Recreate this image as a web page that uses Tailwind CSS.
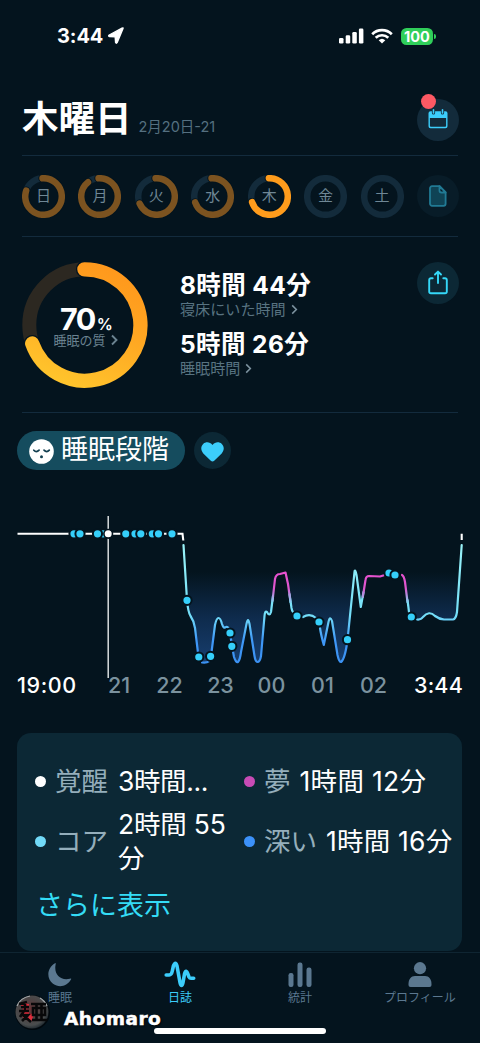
<!DOCTYPE html>
<html lang="ja">
<head>
<meta charset="utf-8">
<title>睡眠日誌</title>
<script src="https://cdn.jsdelivr.net/npm/@tailwindcss/browser@4"></script>
</head>
<body class="bg-[#04141e]">
<div class="relative flex h-[1043px] w-[480px] flex-col overflow-hidden bg-[#04141e] font-[Inter,'Noto_Sans_CJK_JP',sans-serif] text-white">

  <!-- Status bar -->
  <div class="flex h-[72px] shrink-0 items-center justify-between pr-[44px] pl-[57px]">
    <div class="flex items-center gap-1">
      <span class="text-[20px] leading-[24px] font-bold tracking-[-0.1px]">3:44</span>
      <svg class="h-[18px] w-[18px]" viewBox="0 0 18 18"><path d="M16 1.500 10.200 15.500Q9.300 17 8.600 15.500L8.200 9.900 2.500 9.500Q.9 9.100 2.200 8L15 1.200Q16.400.6 16 1.500Z" fill="#fff" stroke="#fff" stroke-width="1.400" stroke-linejoin="round"/></svg>
    </div>
    <div class="flex items-center">
      <svg class="h-[16px] w-[25px]" viewBox="0 0 25 16" fill="#fff"><rect x="0" y="10" width="4.500" height="5.500" rx="1.300"/><rect x="6.700" y="7.300" width="4.500" height="8.200" rx="1.300"/><rect x="13.300" y="4" width="4.500" height="11.500" rx="1.300"/><rect x="19.900" y="0.500" width="4.500" height="15" rx="1.300"/></svg>
      <svg class="ml-[7px] h-[16px] w-[22px]" viewBox="0 0 22 16" fill="none" stroke="#fff" stroke-width="2.700"><path d="M1.200 6.200a14 14 0 0 1 19.600 0"/><path d="M4.700 9.800a9 9 0 0 1 12.600 0"/><path d="M11 15.600 7.700 12.300a4.800 4.800 0 0 1 6.600 0Z" fill="#fff" stroke="none"/></svg>
      <div class="ml-[8px] flex h-[17px] w-[32px] items-center justify-center rounded-[5.500px] bg-[#30cf5a] text-[14.500px] leading-[17px] font-bold">100</div>
      <div class="ml-px h-[5px] w-[2px] rounded-r-full bg-[#30cf5a]"></div>
    </div>
  </div>

  <!-- Date header -->
  <div class="mx-[22px] flex h-[84px] shrink-0 justify-between border-b-[1.500px] border-[#132b3d]">
    <div class="flex items-baseline gap-[7px] pt-[24px]">
      <h1 class="text-[36.500px] leading-[46px] font-bold">木曜日</h1>
      <span class="text-[14.500px] leading-[20px] text-[#557080]">2月20日-21</span>
    </div>
    <div class="relative mt-[27px] -mr-px flex h-[42px] w-[42px] items-center justify-center rounded-full bg-[#132b3b]">
      <svg class="-mt-[2px] h-[20px] w-[20px]" viewBox="0 0 20 20"><path d="M2.500 2.200H3.900V4a1.600 1.600 0 0 0 3.200 0V2.200h5.800V4a1.600 1.600 0 0 0 3.200 0V2.200h1.400a2 2 0 0 1 2 2v13a2 2 0 0 1-2 2h-15a2 2 0 0 1-2-2v-13a2 2 0 0 1 2-2Z" fill="#3ccdfb"/><rect x="4.700" y="0" width="1.600" height="4.800" rx=".8" fill="#3ccdfb"/><rect x="13.700" y="0" width="1.600" height="4.800" rx=".8" fill="#3ccdfb"/><path d="M1.900 9H18.100V16.800a1 1 0 0 1-1 1H2.900a1 1 0 0 1-1-1Z" fill="#132b3b"/></svg>
      <span class="absolute top-[-5px] left-[4px] h-[15px] w-[15px] rounded-full bg-[#fd5964]"></span>
    </div>
  </div>

  <!-- Week -->
  <div class="mx-[22px] flex h-[81px] shrink-0 items-center justify-between border-b-[1.500px] border-[#132b3d] text-[15px] text-[#6f8795]">
    <div class="grid h-[43px] w-[43px] place-items-center *:col-start-1 *:row-start-1"><svg class="h-[43px] w-[43px]" viewBox="0 0 43 43" fill="none"><circle cx="21.500" cy="21.500" r="18.300" stroke="#132b3b" stroke-width="6.500"/><g transform="rotate(-93 21.500 21.500)" stroke-linecap="round"><circle cx="21.500" cy="21.500" r="18.300" pathLength="100" stroke-dasharray="81 100" stroke="#04141e" stroke-width="8.500"/><circle cx="21.500" cy="21.500" r="18.300" pathLength="100" stroke-dasharray="81 100" stroke="#7c5320" stroke-width="6.500"/></g></svg><span class="-mt-[2px] leading-none">日</span></div>
    <div class="grid h-[43px] w-[43px] place-items-center *:col-start-1 *:row-start-1"><svg class="h-[43px] w-[43px]" viewBox="0 0 43 43" fill="none"><circle cx="21.500" cy="21.500" r="18.300" stroke="#132b3b" stroke-width="6.500"/><g transform="rotate(-93 21.500 21.500)" stroke-linecap="round"><circle cx="21.500" cy="21.500" r="18.300" pathLength="100" stroke-dasharray="90 100" stroke="#04141e" stroke-width="8.500"/><circle cx="21.500" cy="21.500" r="18.300" pathLength="100" stroke-dasharray="90 100" stroke="#7c5320" stroke-width="6.500"/></g></svg><span class="-mt-[2px] leading-none">月</span></div>
    <div class="grid h-[43px] w-[43px] place-items-center *:col-start-1 *:row-start-1"><svg class="h-[43px] w-[43px]" viewBox="0 0 43 43" fill="none"><circle cx="21.500" cy="21.500" r="18.300" stroke="#132b3b" stroke-width="6.500"/><g transform="rotate(-93 21.500 21.500)" stroke-linecap="round"><circle cx="21.500" cy="21.500" r="18.300" pathLength="100" stroke-dasharray="69.500 100" stroke="#04141e" stroke-width="8.500"/><circle cx="21.500" cy="21.500" r="18.300" pathLength="100" stroke-dasharray="69.500 100" stroke="#7c5320" stroke-width="6.500"/></g></svg><span class="-mt-[2px] leading-none">火</span></div>
    <div class="grid h-[43px] w-[43px] place-items-center *:col-start-1 *:row-start-1"><svg class="h-[43px] w-[43px]" viewBox="0 0 43 43" fill="none"><circle cx="21.500" cy="21.500" r="18.300" stroke="#132b3b" stroke-width="6.500"/><g transform="rotate(-93 21.500 21.500)" stroke-linecap="round"><circle cx="21.500" cy="21.500" r="18.300" pathLength="100" stroke-dasharray="70.500 100" stroke="#04141e" stroke-width="8.500"/><circle cx="21.500" cy="21.500" r="18.300" pathLength="100" stroke-dasharray="70.500 100" stroke="#7c5320" stroke-width="6.500"/></g></svg><span class="-mt-[2px] leading-none">水</span></div>
    <div class="grid h-[43px] w-[43px] place-items-center *:col-start-1 *:row-start-1"><svg class="h-[43px] w-[43px]" viewBox="0 0 43 43" fill="none"><circle cx="21.500" cy="21.500" r="18.300" stroke="#132b3b" stroke-width="6.500"/><g transform="rotate(-92 21.500 21.500)" stroke-linecap="round"><circle cx="21.500" cy="21.500" r="18.300" pathLength="100" stroke-dasharray="70.500 100" stroke="#04141e" stroke-width="8.500"/><circle cx="21.500" cy="21.500" r="18.300" pathLength="100" stroke-dasharray="70.500 100" stroke="#ff9c1c" stroke-width="6.500"/></g></svg><span class="-mt-[2px] leading-none">木</span></div>
    <div class="grid h-[43px] w-[43px] place-items-center *:col-start-1 *:row-start-1"><svg class="h-[43px] w-[43px]" viewBox="0 0 43 43" fill="none"><circle cx="21.500" cy="21.500" r="18.300" stroke="#132b3b" stroke-width="6.500"/></svg><span class="-mt-[2px] leading-none">金</span></div>
    <div class="grid h-[43px] w-[43px] place-items-center *:col-start-1 *:row-start-1"><svg class="h-[43px] w-[43px]" viewBox="0 0 43 43" fill="none"><circle cx="21.500" cy="21.500" r="18.300" stroke="#132b3b" stroke-width="6.500"/></svg><span class="-mt-[2px] leading-none">土</span></div>
    <div class="-mr-px flex h-[42px] w-[42px] items-center justify-center rounded-full bg-[#081c28]">
      <svg class="h-[22px] w-[18px]" viewBox="0 0 18 22" fill="none" stroke="#217a94" stroke-width="1.800" stroke-linejoin="round"><path d="M3 1.200H10.500L16.600 7.500V18.800a2 2 0 0 1-2 2H3a2 2 0 0 1-2-2V3.200a2 2 0 0 1 2-2Z" fill="#0f4355"/><path d="M10.500 1.200V5.500a2 2 0 0 0 2 2H16.600Z" fill="#081c28"/></svg>
    </div>
  </div>

  <!-- Sleep quality -->
  <div class="mx-[22px] flex h-[176px] shrink-0 border-b-[1.500px] border-[#132b3d] pt-[25px]">
    <div class="grid h-[126px] w-[126px] place-items-center *:col-start-1 *:row-start-1">
      <svg class="h-[126px] w-[126px]" viewBox="0 0 126 126" fill="none">
        <defs><linearGradient id="quality" gradientUnits="userSpaceOnUse" x1="90" y1="5" x2="40" y2="120"><stop offset="0" stop-color="#ff981c"/><stop offset=".45" stop-color="#ffa722"/><stop offset="1" stop-color="#ffc42c"/></linearGradient></defs>
        <circle cx="63" cy="63" r="55.700" stroke="#2c2821" stroke-width="14"/>
        <path d="M62.400 7.300A55.700 55.700 0 1 1 10.200 81.500" stroke="#04141e" stroke-width="17" stroke-linecap="round"/>
        <path d="M62.400 7.300A55.700 55.700 0 1 1 10.200 81.500" stroke="url(#quality)" stroke-width="14.300" stroke-linecap="round"/>
      </svg>
      <div class="flex flex-col items-center pt-[3px]">
        <div class="flex h-[27px] items-baseline gap-[2px] pl-[3px] leading-[27px]"><span class="text-[30.500px] font-bold tracking-[-1.500px]">70</span><span class="text-[16px] leading-[16px] font-semibold">%</span></div>
        <div class="flex items-center gap-[5px] pl-px text-[13px] leading-[16px] text-[#6b8391]">睡眠の質<svg class="h-[12px] w-[7px]" viewBox="0 0 7 12" fill="none" stroke="currentColor" stroke-width="1.900"><path d="m1 1.500 4.500 4.500L1 10.500"/></svg></div>
      </div>
    </div>
    <div class="ml-[32px] flex flex-col pt-[8px]">
      <div class="text-[24.500px] leading-[30px] font-bold tracking-[0.4px]">8時間 44分</div>
      <div class="flex h-[19px] items-center gap-[5px] text-[15.100px] leading-[19px] text-[#587381]">寝床にいた時間<svg class="h-[11px] w-[7px] text-[#7d93a0]" viewBox="0 0 7 12" fill="none" stroke="currentColor" stroke-width="1.700"><path d="m1 1.500 4.500 4.500L1 10.500"/></svg></div>
      <div class="mt-[10px] text-[24.500px] leading-[30px] font-bold tracking-[0.4px]">5時間 26分</div>
      <div class="flex h-[19px] items-center gap-[5px] text-[15.100px] leading-[19px] text-[#587381]">睡眠時間<svg class="h-[11px] w-[7px] text-[#7d93a0]" viewBox="0 0 7 12" fill="none" stroke="currentColor" stroke-width="1.700"><path d="m1 1.500 4.500 4.500L1 10.500"/></svg></div>
    </div>
    <div class="-mr-px ml-auto flex h-[42px] w-[42px] items-center justify-center rounded-full bg-[#0c2835]">
      <svg class="-mt-[2px] h-[25px] w-[20px]" viewBox="0 0 20 25" fill="none" stroke="#35d8f8" stroke-width="1.900" stroke-linecap="round" stroke-linejoin="round"><path d="M4.700 8.300H3A1.800 1.800 0 0 0 1.200 10v11.500A1.800 1.800 0 0 0 3 23.300h14a1.800 1.800 0 0 0 1.800-1.800V10A1.800 1.800 0 0 0 17 8.300h-1.700M10 13V2.200M7 4.500 10 1.600l3 2.900"/></svg>
    </div>
  </div>

  <!-- Metric chips -->
  <div class="flex h-[57px] shrink-0 items-end gap-[9px] pl-[17px]">
    <div class="flex h-[39px] w-[168px] items-center gap-[7px] rounded-full bg-[#154c5e] pl-[12px]">
      <svg class="mt-px h-[25px] w-[25px]" viewBox="0 0 25 25" fill="none" stroke="#123f50" stroke-width="1.700" stroke-linecap="round"><circle cx="12.500" cy="12.500" r="12.300" fill="#fff" stroke="none"/><path d="M4.800 11.200q2.500 2.800 5.300 0M15 11.200q2.700 2.800 5.300 0"/><circle cx="12.500" cy="17.700" r="1.500" fill="#123f50" stroke="none"/></svg>
      <span class="-mt-[2px] text-[27px] leading-none">睡眠段階</span>
    </div>
    <div class="mb-px flex h-[37px] w-[37px] items-center justify-center rounded-full bg-[#0c2835]">
      <svg class="mt-[2px] h-[20px] w-[23px]" viewBox="0 0 23 20"><path d="M11.500 19.500Q10.600 19.500 9.800 18.800L2.300 11.400C-.7 8-.1 3.900 2.200 1.900 5-.5 9-.1 11.500 3 14-.1 18-.5 20.800 1.900c2.300 2 2.900 6.100-.1 9.500L13.200 18.800Q12.400 19.500 11.500 19.500Z" fill="#3ccdfb"/></svg>
    </div>
  </div>

  <!-- Sleep stage chart -->
  <svg class="mt-[30px] h-[180px] w-[480px] shrink-0" viewBox="0 500 480 180" fill="none">
    <defs>
      <linearGradient id="stage" gradientUnits="userSpaceOnUse" x1="0" y1="540" x2="0" y2="665"><stop offset="0" stop-color="#9cf4f8"/><stop offset=".6" stop-color="#74dff8"/><stop offset=".8" stop-color="#3f98f8"/><stop offset="1" stop-color="#3b91f2"/></linearGradient>
      <linearGradient id="dream" gradientUnits="userSpaceOnUse" x1="0" y1="570" x2="0" y2="604"><stop offset="0" stop-color="#ea50d0"/><stop offset=".55" stop-color="#dd57cd"/><stop offset="1" stop-color="#7de2f8"/></linearGradient>
      <linearGradient id="depth" gradientUnits="userSpaceOnUse" x1="0" y1="572" x2="0" y2="664"><stop offset="0" stop-color="#143866" stop-opacity="0"/><stop offset=".5" stop-color="#143866" stop-opacity=".65"/><stop offset="1" stop-color="#183f70"/></linearGradient>
    </defs>
    <path fill="url(#depth)" d="M183.500 545L187 600Q188 612 190.500 616Q194 621 195 628L198.500 657Q200 662 203 662.500Q209 663 211 656L215 625Q216.500 618 218.500 618Q220.500 618 222 624Q223.500 629 226 627Q229 626 230 633L232 646L234 657Q236 663 238 662Q240 660 241 652L246.500 624Q248 616 249.500 624L254.500 656Q255.500 662 257.500 662Q260 662 261 656L264.500 616Q265 610 267 612Q269.500 617 271 612L275 579Q276 574 280 574L285.500 572.500L288 584L291.500 608Q293 614 297 616Q304 617 310 615Q314 616 317 620Q320 623 321 633L323.800 645L328.500 622Q330 615 332 621L337.500 655Q339 662 341 662Q345 659 347.500 640L354.500 572Q355 568 356.500 575L360.800 607L363.500 592L365.500 580Q366 576 369 576L380 576.500L389 573.500L402 575Q404 576 405 582L408.500 610L411 617Q418 621 422 618Q429 610 435 616Q439 619 444 619.500L453 619.500Q456 619 457 612L461.700 545Z"/>
    <g stroke="url(#stage)" stroke-width="2.200" stroke-linecap="round" stroke-linejoin="round">
      <path d="M183.500 545L187 600Q188 612 190.500 616Q194 621 195 628L198.500 657M202 662.500Q207 663 208.500 661.500M211 656L215 625Q216.500 618 218.500 618Q220.500 618 222 624Q223.500 629 226 627Q229 626 230 633L232 646L234 657Q236 663 238 662Q240 660 241 652L246.500 624Q248 616 249.500 624L254.500 656Q255.500 662 257.500 662Q260 662 261 656L264.500 616Q265 610 267 612Q269.500 617 271 612L273 596"/>
      <path d="M289.500 594L291.500 608Q292 611 293 612M303 617Q310 613 316 618M320 628Q321 635 323.800 645L328.500 622Q330 615 332 621L337.500 655Q339 662 341 662Q345 659 347.500 640L354.500 572Q355 568 356.500 575L360.800 607L363.500 592M407.500 600L409 612M417 619.500Q421 620 423 617Q429 610 435 616Q439 619 444 619.500L453 619.500Q456 619 457 612L461.700 545"/>
    </g>
    <path d="M272.500 601L275 579Q276 574 280 574L285.500 572.500L288 584L290.500 602M362.800 597L365.500 580Q366 576 369 576L380 576.500L384 575.200M402 575Q404 576 405 582L407.500 602" stroke="url(#dream)" stroke-width="2.200" stroke-linecap="round" stroke-linejoin="round"/>
    <path d="M17.500 533.700H182.500L183.300 540.500M461.700 533.700V540" stroke="#fff" stroke-width="2.100"/>
    <g fill="#35cffa" stroke="#04141e" stroke-width="2">
      <circle cx="74" cy="533.800" r="4.600"/><circle cx="80" cy="533.800" r="4.600"/><circle cx="103" cy="533.800" r="4.600"/><circle cx="97.500" cy="533.800" r="4.600"/>
      <circle cx="125.800" cy="533.800" r="4.600"/><circle cx="135" cy="533.800" r="4.600"/><circle cx="140.800" cy="533.800" r="4.600"/><circle cx="152.300" cy="533.800" r="4.600"/><circle cx="158.500" cy="533.800" r="4.600"/><circle cx="172" cy="533.800" r="4.600"/>
      <circle cx="187" cy="600.300" r="4.600"/><circle cx="198.800" cy="657" r="4.600"/><circle cx="210.600" cy="656.300" r="4.600"/><circle cx="230" cy="633" r="4.600"/><circle cx="231.800" cy="646.300" r="4.600"/>
      <circle cx="297" cy="616" r="4.600"/><circle cx="319" cy="622" r="4.600"/><circle cx="347.500" cy="639.700" r="4.600"/><circle cx="389" cy="573" r="4.600"/><circle cx="395" cy="575" r="4.600"/><circle cx="411.300" cy="617" r="4.600"/>
    </g>
    <path d="M108.200 516V678" stroke="#e6e9ea" stroke-width="1.400"/>
    <circle cx="108.200" cy="533.800" r="4.300" fill="#fff" stroke="#04141e" stroke-width="1.600"/>
  </svg>
  <div class="-mt-[7px] flex h-[24px] shrink-0 text-[21.500px] leading-[25px] font-medium text-[#7b929e]">
    <span class="w-[90px] pl-[17px] tracking-[0.600px] text-white">19:00</span>
    <span class="w-[54px] pl-[4px] text-center">21</span>
    <span class="w-[51px] text-center">22</span>
    <span class="w-[51px] text-center">23</span>
    <span class="w-[51px] text-center">00</span>
    <span class="w-[51px] text-center">01</span>
    <span class="w-[51px] text-center">02</span>
    <span class="ml-auto pr-[17px] tracking-[0.2px] text-white">3:44</span>
  </div>

  <!-- Stage totals -->
  <div class="mt-[36px] ml-[17px] flex h-[218px] w-[445px] shrink-0 flex-col rounded-[14px] bg-[#0c2835] pt-[18px] pl-[18px] text-[26.500px] leading-[34px]">
    <div class="grid h-[120px] grid-cols-[209px_1fr] grid-rows-2 items-center">
      <div class="flex items-center"><i class="h-[11px] w-[11px] rounded-full bg-white"></i><span class="ml-[9px] w-[63px] text-[#94aebb]">覚醒</span><span class="tracking-[-0.4px]">3時間...</span></div>
      <div class="flex items-center whitespace-nowrap"><i class="h-[11px] w-[11px] rounded-full bg-[#c84bb5]"></i><span class="mr-[9px] ml-[9px] text-[#94aebb]">夢</span><span class="tracking-[0.300px]">1時間 12分</span></div>
      <div class="flex items-center"><i class="h-[11px] w-[11px] shrink-0 rounded-full bg-[#72daf8]"></i><span class="ml-[9px] w-[63px] shrink-0 text-[#94aebb]">コア</span><span class="tracking-[-0.2px] whitespace-nowrap">2時間 55<br>分</span></div>
      <div class="flex items-center whitespace-nowrap"><i class="h-[11px] w-[11px] rounded-full bg-[#3c91f9]"></i><span class="mr-[9px] ml-[9px] text-[#94aebb]">深い</span><span class="tracking-[0.200px]">1時間 16分</span></div>
    </div>
    <a class="mt-[18px] pl-px text-[27px] text-[#34dcf6]">さらに表示</a>
  </div>

  <!-- Tab bar -->
  <nav class="mt-px grid h-[91px] shrink-0 grid-cols-4 border-t border-[#0f2532] pt-[8px] text-[12px] leading-[16px] text-[#5b7890]">
    <div class="flex flex-col items-center"><svg class="h-[27px] w-[26px]" viewBox="0 0 26 27"><path d="M8 2.200Q9 1.500 8.700 3C6.500 13 13 20 22.800 17.800Q25 17 23.800 18.800C20 25.500 12 27 6 22.800-.8 17.500-.2 7 8 2.200Z" fill="#5b7890"/></svg><span class="mt-[2px]">睡眠</span></div>
    <div class="flex flex-col items-center text-[#3ccdfb]"><svg class="h-[27px] w-[32px]" viewBox="0 0 32 27" fill="none" stroke="currentColor" stroke-width="3.600" stroke-linecap="round" stroke-linejoin="round"><path d="M2.200 14H5.200Q7.500 14 8.300 10L9.400 5Q11.500-.5 13 5L16 21.500Q17.500 27.500 19 21.500L20.500 13Q22 7.500 24 13.500L25 16Q25.600 17.200 27 17.200H29.700"/></svg><span class="mt-[2px]">日誌</span></div>
    <div class="flex flex-col items-center"><svg class="h-[27px] w-[26px]" viewBox="0 0 26 27" fill="#5b7890"><rect x="1.500" y="12" width="5" height="14" rx="2.200"/><rect x="10.500" y="1.500" width="5" height="24.500" rx="2.200"/><rect x="19.500" y="6.500" width="5" height="19.500" rx="2.200"/></svg><span class="mt-[2px]">統計</span></div>
    <div class="flex flex-col items-center"><svg class="h-[27px] w-[26px]" viewBox="0 0 26 27" fill="#5b7890"><circle cx="13" cy="7.200" r="6.100"/><path d="M1.500 23.500C1.500 18 4 15 8 15h10c4 0 6.500 3 6.500 8.500V24a2 2 0 0 1-2 2h-19a2 2 0 0 1-2-2Z"/></svg><span class="mt-[2px] whitespace-nowrap">プロフィール</span></div>
  </nav>

  <div class="absolute top-[1028px] left-[154px] h-[6px] w-[172px] rounded-full bg-white"></div>

  <!-- Author signature -->
  <div class="absolute top-[993px] left-[14px] flex items-center">
    <svg class="h-[36px] w-[36px]" viewBox="0 0 36 36">
      <defs><radialGradient id="seal" cx=".45" cy=".42" r=".6"><stop offset="0" stop-color="#6b3437"/><stop offset=".5" stop-color="#4c4444"/><stop offset=".8" stop-color="#4a4d4e"/><stop offset="1" stop-color="#202a30"/></radialGradient></defs>
      <circle cx="18.500" cy="18.500" r="17.500" fill="#01080d"/><circle cx="18" cy="18" r="16.500" fill="url(#seal)"/>
      <path d="M3 12Q6 4 16 2M26 4Q31 7 33 12" stroke="#a5aaac" stroke-width="1.200" fill="none"/>
      <g fill="none" stroke="#e02d3c" stroke-width="4.200"><path d="M7 12h8M11 9v15M7 18h8M15 27l3-7"/></g>
      <g fill="none" stroke="#080809" stroke-width="2.600"><path d="M5 10 13 8M7 13h8M5 17h10M11 8v9M10 17 6 23M7 21h7l-6 6M9 21l8 7M17 10h15M18 26h15M19 14h12v7H19ZM22.500 10v16M27.500 10v16"/></g>
    </svg>
    <span class="mt-[15px] ml-[14px] font-['DejaVu_Sans'] text-[18.500px] leading-[22px] font-bold tracking-[0.500px] [-webkit-text-stroke:0.500px_#fff] [text-shadow:1px_1px_2px_#000]">Ahomaro</span>
  </div>
</div>
</body>
</html>
